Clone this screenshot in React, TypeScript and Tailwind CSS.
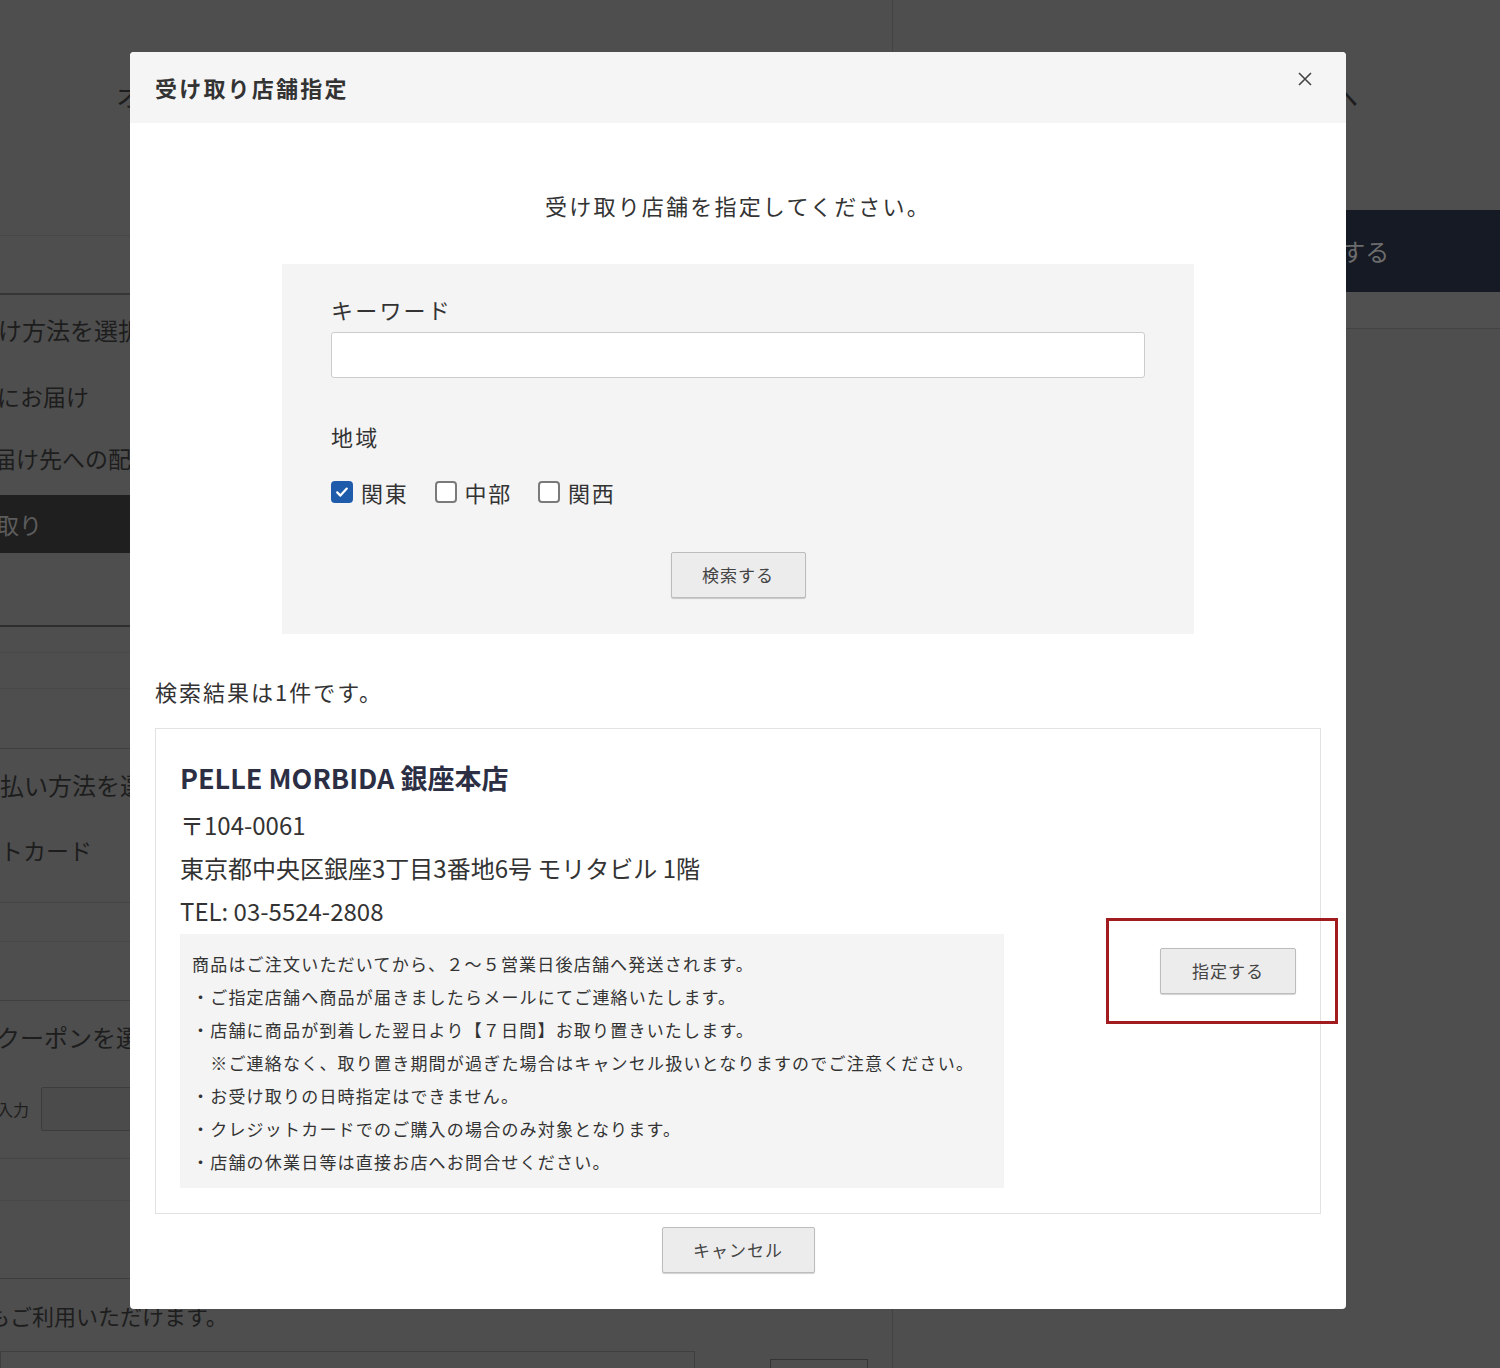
import React from 'react';

// 受け取り店舗指定モーダル（背景ページは暗転表示）

const notes: string[] = [
  '商品はご注文いただいてから、２～５営業日後店舗へ発送されます。',
  '・ご指定店舗へ商品が届きましたらメールにてご連絡いたします。',
  '・店舗に商品が到着した翌日より【７日間】お取り置きいたします。',
  '　※ご連絡なく、取り置き期間が過ぎた場合はキャンセル扱いとなりますのでご注意ください。',
  '・お受け取りの日時指定はできません。',
  '・クレジットカードでのご購入の場合のみ対象となります。',
  '・店舗の休業日等は直接お店へお問合せください。',
];

const regions = [
  { label: '関東', checked: true },
  { label: '中部', checked: false },
  { label: '関西', checked: false },
];

const RegionCheck: React.FC<{ label: string; checked: boolean }> = ({ label, checked }) => (
  <label className="flex items-center gap-[8px]">
    {checked ? (
      <span className="flex h-[22px] w-[22px] items-center justify-center rounded-[4px] bg-[#1f5bab]">
        <svg viewBox="0 0 16 16" className="h-[16px] w-[16px]">
          <path
            d="M3.2 8.4 L6.4 11.6 L12.8 4.6"
            fill="none"
            stroke="#fff"
            strokeWidth="2.2"
            strokeLinecap="round"
            strokeLinejoin="round"
          />
        </svg>
      </span>
    ) : (
      <span className="h-[22px] w-[22px] rounded-[4px] border-2 border-[#7a7a7a] bg-white" />
    )}
    <span className="leading-[32px]">{label}</span>
  </label>
);

const GrayButton: React.FC<{ children: React.ReactNode; className?: string }> = ({ children, className = '' }) => (
  <button
    type="button"
    className={`h-[46px] rounded-[2px] border border-[#bcbcbc] bg-[#ececec] text-[17px] tracking-[1px] text-[#444] shadow-[0_1px_1px_rgba(0,0,0,0.18)] ${className}`}
  >
    {children}
  </button>
);

const BgRow: React.FC<{ className?: string; children?: React.ReactNode }> = ({ className = '', children }) => (
  <div className={`flex items-center whitespace-nowrap ${className}`}>{children}</div>
);

const BackgroundPage: React.FC = () => (
  <div className="flex h-[1368px] text-[#1d1d1d]">
    {/* left column */}
    <div className="w-[893px] shrink-0 overflow-hidden border-r border-[#434343]">
      <BgRow className="h-[236px] items-start border-b border-[#474747] pl-[116px] pt-[74px] text-[28px]">
        オーダー内容のご確認
      </BgRow>
      <BgRow className="h-[59px] border-b-2 border-[#363636]" />
      <BgRow className="h-[70px] text-[24px]">
        <span className="-ml-[50px]">お届け方法を選択</span>
      </BgRow>
      <BgRow className="h-[62px] text-[23px]">
        <span className="-ml-[72px]">ご自宅にお届け</span>
      </BgRow>
      <BgRow className="h-[68px] pb-[6px] text-[23px]">
        <span className="-ml-[76px]">別のお届け先への配送</span>
      </BgRow>
      <BgRow className="h-[58px] bg-[#1f1f1f] text-[23px] text-[#5c5c5c]">
        <span className="-ml-[96px]">店舗受け取り</span>
      </BgRow>
      <BgRow className="h-[74px] border-b-2 border-[#2e2e2e]" />
      <BgRow className="h-[26px] border-b border-[#484848]" />
      <BgRow className="h-[36px] border-b border-[#484848]" />
      <BgRow className="h-[60px] border-b border-[#3f3f3f]" />
      <BgRow className="h-[72px] text-[24px]">
        <span className="-ml-[48px]">お支払い方法を選択</span>
      </BgRow>
      <BgRow className="h-[58px] text-[23px]">
        <span className="-ml-[92px]">クレジットカード</span>
      </BgRow>
      <BgRow className="h-[24px] border-b border-[#444]" />
      <BgRow className="h-[39px] border-b border-[#484848]" />
      <BgRow className="h-[59px] border-b border-[#3f3f3f]" />
      <BgRow className="h-[72px] text-[24px]">
        <span className="-ml-[4px]">クーポンを選択</span>
      </BgRow>
      <BgRow className="h-[72px] gap-[12px] text-[16px]">
        <span className="-ml-[51px]">コード入力</span>
        <span className="h-[44px] w-[400px] rounded-[2px] border border-[#3c3c3c] bg-[#4b4b4b]" />
      </BgRow>
      <BgRow className="h-[14px] border-b border-[#444]" />
      <BgRow className="h-[42px] border-b border-[#484848]" />
      <BgRow className="h-[78px] border-b border-[#3c3c3c]" />
      <BgRow className="h-[72px] text-[22px]">
        <span className="-ml-[12px]">もご利用いただけます。</span>
      </BgRow>
      <BgRow className="items-start gap-[75px]">
        <span className="h-[40px] w-[695px] border border-[#3f3f3f]" />
        <span className="mt-[8px] h-[40px] w-[98px] border border-[#353535]" />
      </BgRow>
    </div>
    {/* right column */}
    <div className="flex-1">
      <div className="h-[210px] pr-[142px] pt-[74px] text-right text-[28px]">ご注文内容の確認へ</div>
      <div className="ml-[50px] flex h-[82px] items-center justify-center bg-[#161a24] text-[24px] text-[#6c6c6c]">
        ご注文内容を確認して購入する
      </div>
      <div className="h-[37px] border-b border-[#434343] bg-[#505050]" />
    </div>
  </div>
);

const StoreModal: React.FC = () => (
  <div className="absolute left-[130px] top-[52px] w-[1216px] overflow-hidden rounded-[4px] bg-white text-[#333]">
    {/* header */}
    <div className="relative flex h-[71px] items-center bg-[#f5f5f5] px-[25px]">
      <h2 className="text-[22px] font-bold tracking-[0.1em] text-[#333]">受け取り店舗指定</h2>
      <button type="button" className="absolute right-[34px] top-[20px] p-0 text-[#444]" aria-label="close">
        <svg viewBox="0 0 14 14" className="h-[14px] w-[14px]">
          <path d="M1 1 L13 13 M13 1 L1 13" stroke="currentColor" strokeWidth="1.6" fill="none" />
        </svg>
      </button>
    </div>

    {/* body */}
    <div className="px-[25px] pb-[36px]">
      <p className="mt-[66px] text-center text-[22px] leading-[32px] tracking-[2.2px]">
        受け取り店舗を指定してください。
      </p>

      {/* search form */}
      <div className="mx-auto mt-[43px] w-[912px] bg-[#f4f4f4] px-[49px] pb-[36px] pt-[29px] text-[22px] tracking-[0.1em]">
        <div className="leading-[32px]">キーワード</div>
        <input
          type="text"
          className="mt-[7px] block h-[46px] w-[814px] rounded-[3px] border border-[#cccccc] bg-white px-[10px] outline-none"
        />
        <div className="mt-[42px] leading-[32px]">地域</div>
        <div className="mt-[24px] flex items-center gap-[26px] tracking-[0.08em]">
          {regions.map((r) => (
            <RegionCheck key={r.label} label={r.label} checked={r.checked} />
          ))}
        </div>
        <div className="mt-[44px] flex justify-center">
          <GrayButton className="w-[135px]">検索する</GrayButton>
        </div>
      </div>

      <p className="mt-[41px] text-[22px] leading-[32px] tracking-[2px]">検索結果は1件です。</p>

      {/* result */}
      <div className="mt-[21px] flex items-center border border-[#e2e2e2] pb-[25px] pl-[24px] pr-[24px] pt-[31px]">
        <div className="w-[824px] shrink-0">
          <div className="text-[27px] font-bold leading-[36px] text-[#2c2f44]">PELLE MORBIDA 銀座本店</div>
          <div className="mt-[7px] text-[24px] leading-[43px]">
            <div>〒104-0061</div>
            <div>東京都中央区銀座3丁目3番地6号 モリタビル 1階</div>
            <div>TEL: 03-5524-2808</div>
          </div>
          <div className="mt-[2px] bg-[#f4f4f4] px-[12px] pb-[10px] pt-[13px] text-[17px] leading-[33px] tracking-[1.2px]">
            {notes.map((n) => (
              <div key={n} className="whitespace-pre">
                {n}
              </div>
            ))}
          </div>
        </div>
        <div className="mb-[7px] flex flex-1 justify-end">
          <div className="relative">
            <GrayButton className="w-[136px]">指定する</GrayButton>
            {/* annotation frame */}
            <span className="pointer-events-none absolute -bottom-[30px] -left-[54px] -right-[42px] -top-[30px] border-[3px] border-[#a01c1f]" />
          </div>
        </div>
      </div>

      <div className="mt-[13px] flex justify-center">
        <GrayButton className="w-[153px]">キャンセル</GrayButton>
      </div>
    </div>
  </div>
);

export default function App() {
  return (
    <div className="relative h-[1368px] w-full overflow-hidden bg-[#4e4e4e] font-['Noto_Sans_CJK_JP','Noto_Sans',sans-serif]">
      <BackgroundPage />
      <StoreModal />
    </div>
  );
}
